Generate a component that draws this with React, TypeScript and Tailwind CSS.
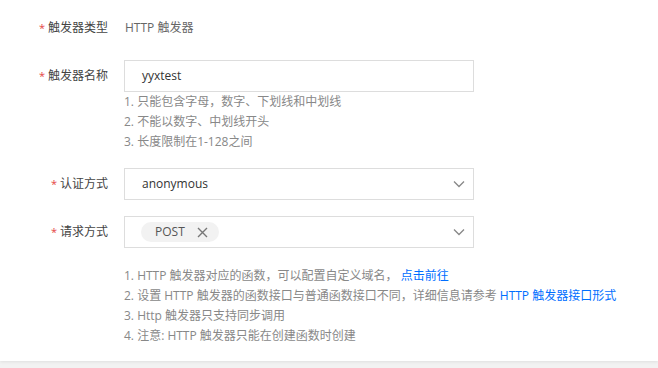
import React from "react";

const font = { fontFamily: '"Open Sans", "Noto Sans CJK SC", sans-serif' };

function Chevron() {
  return (
    <svg width="14" height="14" viewBox="0 0 14 14" fill="none" className="text-[#888]">
      <path d="M2 4.5 L7 9.5 L12 4.5" stroke="currentColor" strokeWidth="1.3" />
    </svg>
  );
}

function Label({ children }: { children: React.ReactNode }) {
  return (
    <div className="w-[108px] shrink-0 flex items-center justify-end h-8 text-[12px] text-[#444]">
      <span className="text-[#e54545] mr-[3px] text-[11px]">*</span>
      {children}
    </div>
  );
}

export default function App() {
  return (
    <div className="w-[658px] h-[368px] bg-[#f2f2f2] text-[12px]" style={font}>
      <div className="bg-white h-[361px] pt-3 flex flex-col gap-4 shadow-[0_1px_3px_rgba(0,0,0,0.08)]">
        <div className="flex gap-4">
          <Label>触发器类型</Label>
          <div className="h-8 flex items-center text-[#666] pl-[1px]">HTTP 触发器</div>
        </div>
        <div className="flex gap-4">
          <Label>触发器名称</Label>
          <div className="flex flex-col">
            <div className="w-[350px] h-8 border border-[#ddd] flex items-center pl-[17px] text-[#333]">yyxtest</div>
            <div className="text-[#888] leading-5">
              <div>1. 只能包含字母，数字、下划线和中划线</div>
              <div>2. 不能以数字、中划线开头</div>
              <div>3. 长度限制在1-128之间</div>
            </div>
          </div>
        </div>
        <div className="flex gap-4">
          <Label>认证方式</Label>
          <div className="w-[350px] h-8 border border-[#ddd] flex items-center justify-between pl-[17px] pr-[7px] text-[#333]">
            <span>anonymous</span>
            <Chevron />
          </div>
        </div>
        <div className="flex gap-4">
          <Label>请求方式</Label>
          <div className="flex flex-col">
            <div className="w-[350px] h-8 border border-[#ddd] flex items-center justify-between pl-4 pr-[7px]">
              <span className="h-5 rounded-full bg-[#f2f2f2] flex items-center pl-[14px] pr-[11px] gap-[12px] text-[#555]">
                POST
                <svg width="11" height="11" viewBox="0 0 11 11" className="text-[#777]">
                  <path d="M1 1 L10 10 M10 1 L1 10" stroke="currentColor" strokeWidth="1.4" />
                </svg>
              </span>
              <Chevron />
            </div>
            <div className="text-[#888] leading-5 mt-[18px]">
              <div>
                1. HTTP 触发器对应的函数，可以配置自定义域名， <span className="text-[#006eff]">点击前往</span>
              </div>
              <div>
                2. 设置 HTTP 触发器的函数接口与普通函数接口不同，详细信息请参考{" "}
                <span className="text-[#006eff]">HTTP 触发器接口形式</span>
              </div>
              <div>3. Http 触发器只支持同步调用</div>
              <div>4. 注意: HTTP 触发器只能在创建函数时创建</div>
            </div>
          </div>
        </div>
      </div>
    </div>
  );
}
